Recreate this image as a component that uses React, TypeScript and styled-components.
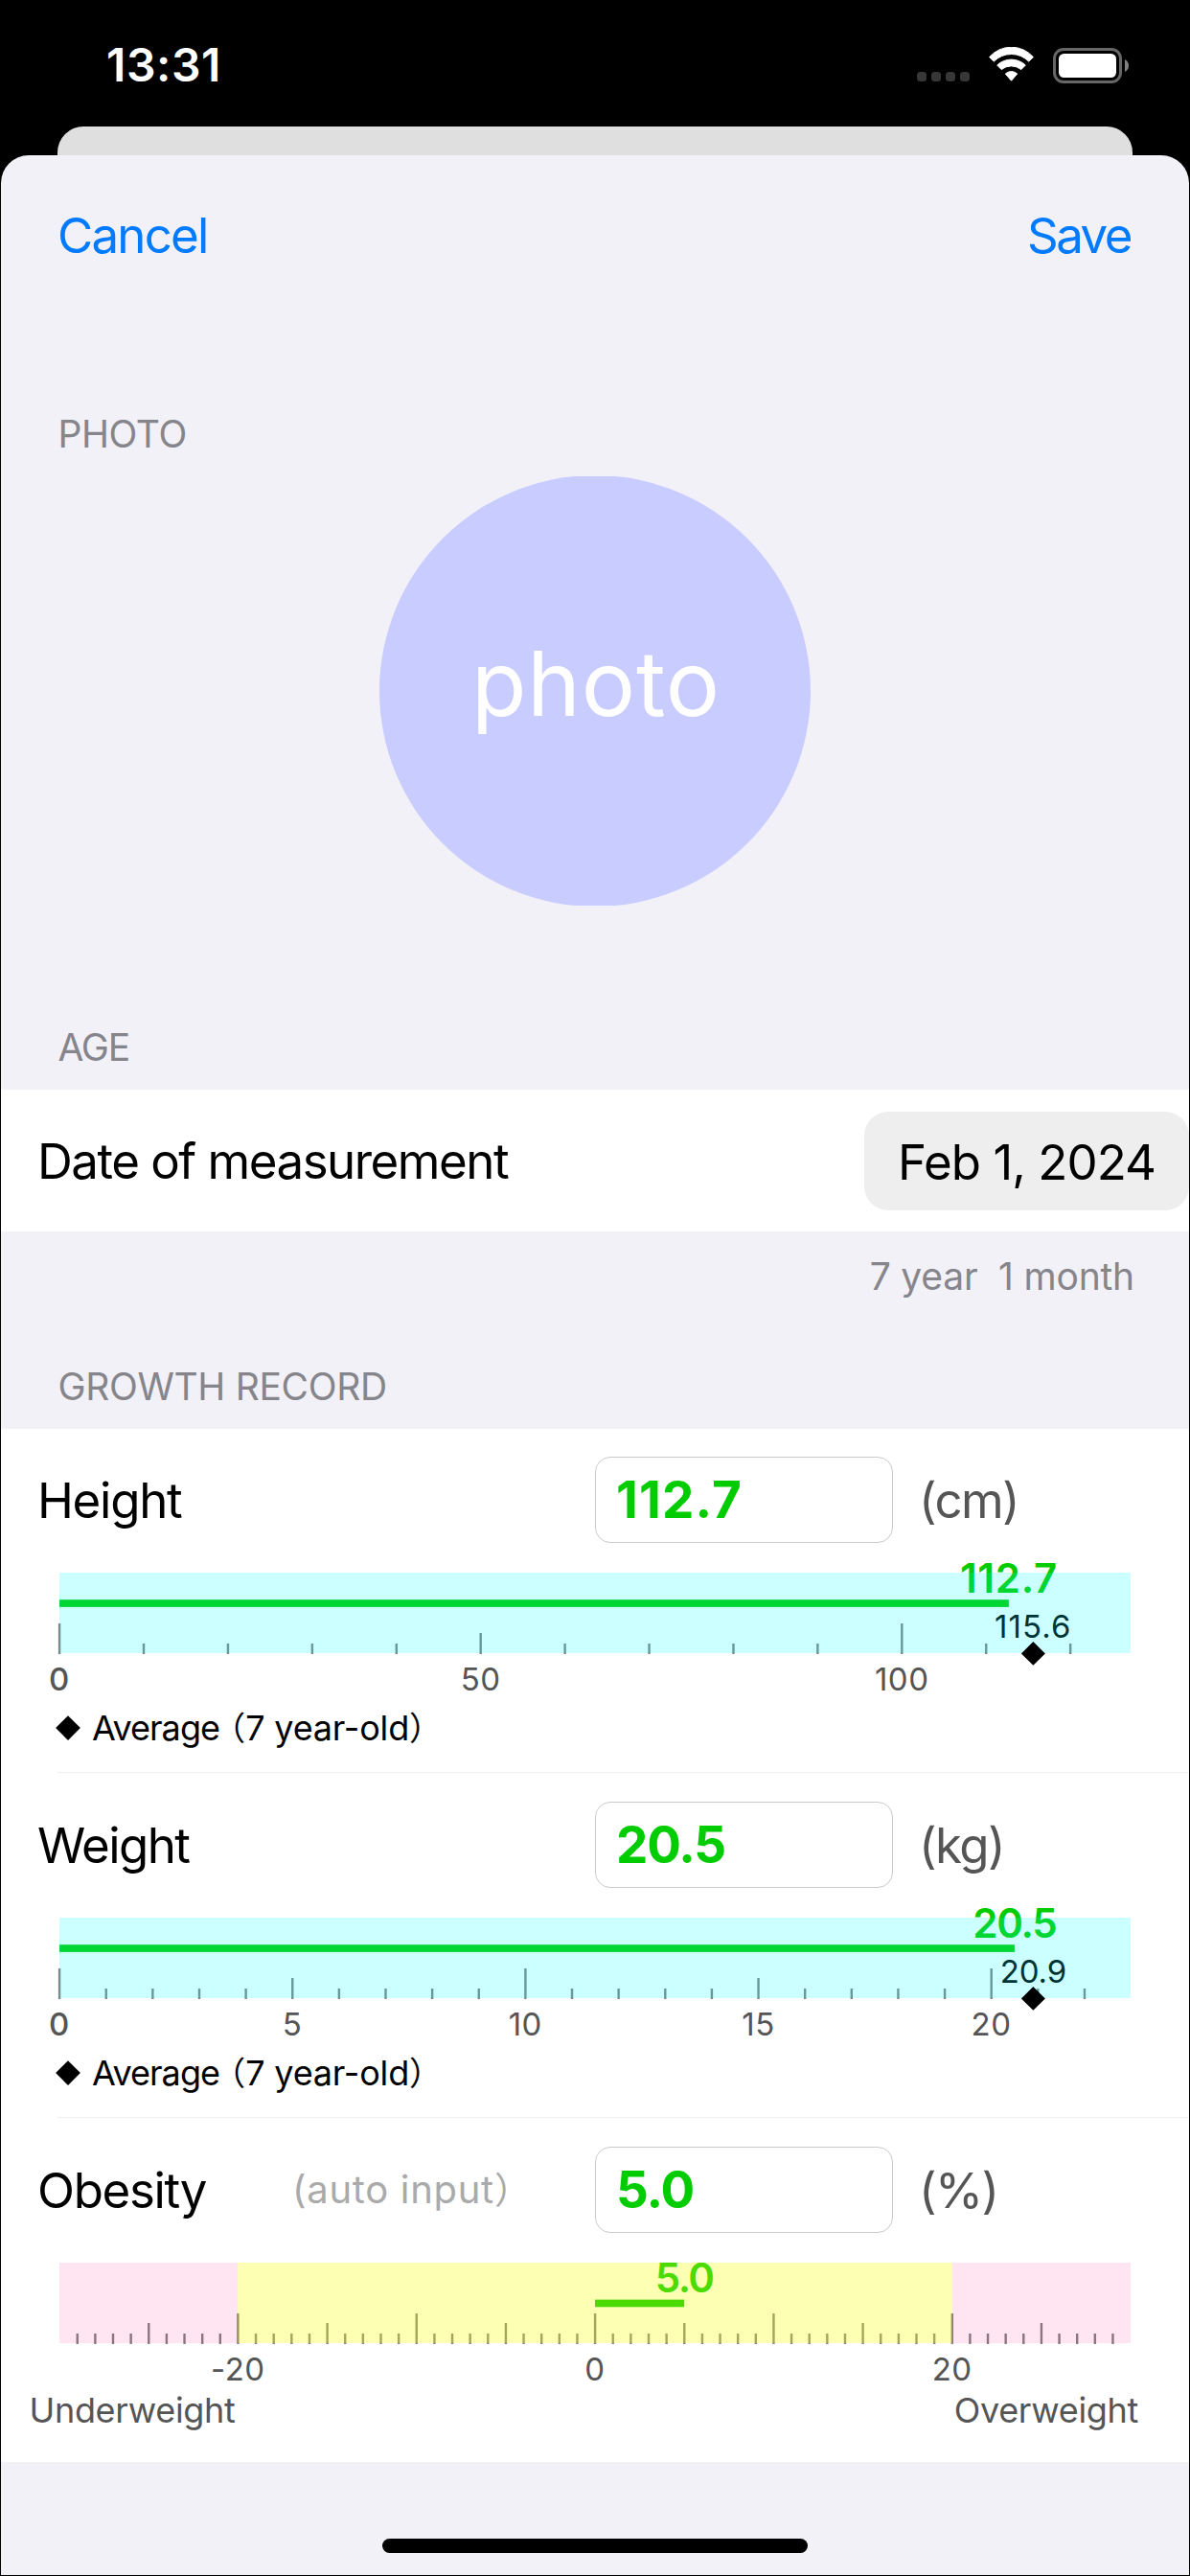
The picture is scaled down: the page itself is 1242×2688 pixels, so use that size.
import React from "react";
import styled, { createGlobalStyle } from "styled-components";

const GlobalStyle = createGlobalStyle`
  *, *::before, *::after { box-sizing: border-box; }
  html, body { margin: 0; padding: 0; background: #000; }
  body { font-family: Inter, "Noto Sans CJK JP", sans-serif; color: #000; }
`;

/* ---------- frame ---------- */

const Screen = styled.div`
  display: flex;
  flex-direction: column;
  width: 1242px;
  height: 2688px;
  background: #000;
  overflow: hidden;
`;

const StatusBar = styled.header`
  display: flex;
  align-items: center;
  flex: none;
  height: 132px;
  padding: 4px 64px 0 111px;
  color: #fff;
`;

const Clock = styled.div`
  font-size: 48px;
  font-weight: 600;
  line-height: 60px;
  letter-spacing: 0.58px;
`;

const StatusIcons = styled.div`
  display: flex;
  align-items: center;
  margin-left: auto;

  svg { display: block; }
`;

const DotsIcon = styled.svg`
  margin: 24px 20px 0 0;
`;

const WifiIcon = styled.svg`
  margin: 0 20px 2px 0;
`;

const BackCard = styled.div`
  flex: none;
  height: 30px;
  margin: 0 60px;
  border-radius: 27px 27px 0 0;
  background: #dfdfdf;
`;

const Sheet = styled.main`
  display: flex;
  flex-direction: column;
  flex: 1;
  margin: 0 1px 1px;
  border-radius: 29px 29px 0 0;
  background: #f2f1f7;
  overflow: hidden;
`;

const NavBar = styled.nav`
  display: flex;
  align-items: center;
  justify-content: space-between;
  height: 168px;
  margin-bottom: 78px;
  padding: 0 61px 0 59px;
`;

const NavButton = styled.button<{ $tracking: number }>`
  border: 0;
  padding: 0;
  background: none;
  color: #007aff;
  font: 400 51px/62px Inter, sans-serif;
  letter-spacing: ${(p) => p.$tracking}px;
`;

const SectionHeader = styled.h2<{ $tracking: number }>`
  height: 89px;
  margin: 0;
  padding-left: 59.4px;
  color: #85858b;
  font-size: 39px;
  font-weight: 400;
  line-height: 89px;
  letter-spacing: ${(p) => p.$tracking}px;
  text-transform: uppercase;
`;

/* ---------- photo ---------- */

const PhotoArea = styled.div`
  display: flex;
  justify-content: center;
  align-items: center;
  height: 448px;
  margin-bottom: 103px;
  overflow: hidden;
`;

const PhotoCircle = styled.div`
  display: flex;
  justify-content: center;
  align-items: center;
  flex: none;
  width: 450px;
  height: 450px;
  padding: 0 0 17px 2px;
  border-radius: 50%;
  background: #c9ccff;
  color: #fff;
  font-size: 94px;
  line-height: 110px;
  letter-spacing: 0.9px;
`;

/* ---------- date ---------- */

const DateRow = styled.div`
  display: flex;
  align-items: center;
  justify-content: space-between;
  height: 148px;
  padding-left: 38px;
  background: #fff;
`;

const RowLabel = styled.div<{ $tracking: number }>`
  padding-top: 2px;
  font-size: 51px;
  line-height: 62px;
  letter-spacing: ${(p) => p.$tracking}px;
  white-space: nowrap;
`;

const DatePill = styled.div`
  width: 339px;
  height: 103px;
  padding-left: 35px;
  border-radius: 25px;
  background: #eeeeef;
  font-size: 51px;
  line-height: 105px;
  letter-spacing: -0.98px;
  white-space: nowrap;
`;

const SectionFooter = styled.div`
  height: 117px;
  padding-right: 57px;
  color: #85858b;
  font-size: 39px;
  line-height: 94px;
  letter-spacing: -0.18px;
  text-align: right;
  white-space: pre;
`;

/* ---------- metrics ---------- */

const MetricList = styled.div`
  background: #fff;
`;

const Metric = styled.section`
  position: relative;
  height: 360px;
  padding-top: 30px;

  &:first-child { height: 359px; padding-top: 29px; }
  &:last-child { height: 359px; }
  &:not(:last-child)::after {
    content: "";
    position: absolute;
    left: 59px;
    right: 0;
    bottom: 0;
    height: 1px;
    background: #f1f1f2;
  }
`;

const MetricHead = styled.div`
  display: grid;
  grid-template-columns: 266px 316px 311px 1fr;
  align-items: center;
  height: 90px;
  padding-left: 38px;
`;

const Hint = styled.div`
  color: #aaa;
  font-size: 40px;
  line-height: 50px;
  letter-spacing: 0.7px;
  white-space: nowrap;
`;

const WideParen = styled.span`
  font-family: "Noto Sans CJK JP", sans-serif;
  font-size: 0.95em;
  font-feature-settings: "halt";
  letter-spacing: 0;
  line-height: 0;
`;

const ValueField = styled.div<{ $tracking: number }>`
  height: 90px;
  padding-left: 21px;
  border: 1px solid #cacacc;
  border-radius: 16px;
  color: #00cc00;
  font-size: 53px;
  font-weight: 700;
  line-height: 88px;
  letter-spacing: ${(p) => p.$tracking}px;
`;

const Unit = styled.div`
  padding: 2px 0 0 27px;
  color: #555;
  font-size: 51px;
  line-height: 62px;
  letter-spacing: -1.6px;
`;

const Legend = styled.div`
  display: flex;
  align-items: center;
  gap: 12px;
  height: 66px;
  padding-left: 57px;
  font-size: 36px;
  line-height: 44px;
  white-space: pre;
`;

const LegendWord = styled.span`
  margin-right: 10px;
  letter-spacing: -0.96px;
`;

const LegendAge = styled.span`
  letter-spacing: -0.17px;
`;

const RangeCaptions = styled.div`
  display: flex;
  justify-content: space-between;
  padding: 0 53px 0 29.5px;
  color: #555;
  font-size: 36px;
  line-height: 51px;
  letter-spacing: -0.33px;
`;

const HomeIndicator = styled.div`
  width: 444px;
  height: 15px;
  margin: 80px auto 0;
  border-radius: 8px;
  background: #000;
`;

/* ---------- chart ---------- */

const ChartSvg = styled.svg`
  display: block;
  margin-bottom: -15px;
  font-family: Inter, sans-serif;
  text-anchor: middle;
`;

const AxisText = styled.text<{ $strong: boolean }>`
  fill: #555;
  font-size: 33px;
  font-weight: ${(p) => (p.$strong ? 500 : 400)};
  letter-spacing: 0.5px;
`;

const ValueText = styled.text<{ $tracking: number }>`
  fill: #00cc00;
  font-size: 42px;
  font-weight: 600;
  letter-spacing: ${(p) => p.$tracking}px;
`;

const AverageText = styled.text<{ $tracking: number }>`
  fill: #000;
  font-size: 33px;
  letter-spacing: ${(p) => p.$tracking}px;
`;

type Band = { from: number; to: number; fill: string };

type ChartProps = {
  min: number;
  max: number;
  step: number;
  labels: number[];
  bands: Band[];
  value: number;
  valueTracking: number;
  average?: number;
  averageTracking?: number;
  drop?: number;
};

const LEFT = 61;
const WIDTH = 1118;

function GaugeChart({
  min,
  max,
  step,
  labels,
  bands,
  value,
  valueTracking,
  average,
  averageTracking = 0,
  drop = 0,
}: ChartProps) {
  const x = (v: number) => LEFT + ((v - min) / (max - min)) * WIDTH;

  const ticks: number[] = [];
  const first = min === 0 ? 0 : Math.ceil(min / step) + 1;
  for (let i = first; i * step < max; i++) ticks.push(i);
  const tickTop = (i: number) => (i % 10 === 0 ? 84 : i % 5 === 0 ? 94 : 105);

  return (
    <ChartSvg width="1240" height="175" viewBox="0 0 1240 175">
      {ticks.map((i) => (
        <rect key={i} x={x(i * step) - 1.1} y={tickTop(i)} width="2.4" height={116 - tickTop(i)} fill="#808080" />
      ))}
      <rect x={x(0)} y={59.2 + drop} width={x(value) - x(0)} height="7.7" fill="#00cc00" />
      <ValueText x={x(value)} y={52 + drop} $tracking={valueTracking}>
        {value.toFixed(1)}
      </ValueText>
      {average !== undefined && (
        <AverageText x={x(average)} y="99" $tracking={averageTracking}>
          {average.toFixed(1)}
        </AverageText>
      )}
      {bands.map((b) => (
        <rect key={b.from} x={x(b.from)} y="31" width={x(b.to) - x(b.from)} height="84" fill={b.fill} />
      ))}
      {average !== undefined && (
        <path d={`M${x(average)} 103l12.5 12.4l-12.5 12.4l-12.5 -12.4z`} fill="#000" />
      )}
      {labels.map((v) => (
        <AxisText key={v} x={x(v)} y="154" $strong={v === 0 && min === 0}>
          {v}
        </AxisText>
      ))}
    </ChartSvg>
  );
}

const AverageLegend = () => (
  <Legend>
    <svg width="26" height="26" viewBox="0 0 26 26">
      <path d="M13 .3l12.9 12.8L13 25.9.1 13.1z" />
    </svg>
    <div>
      <LegendWord>Average</LegendWord>
      <WideParen>（</WideParen>
      <LegendAge>7 year-old</LegendAge>
      <WideParen>）</WideParen>
    </div>
  </Legend>
);

const CYAN = "rgba(0, 255, 255, 0.2)";
const PINK = "rgba(255, 0, 128, 0.1)";
const YELLOW = "rgba(247, 255, 0, 0.3)";

export default function App() {
  return (
    <>
      <GlobalStyle />
      <Screen>
        <StatusBar>
          <Clock>13:31</Clock>
          <StatusIcons>
            <DotsIcon width="55" height="10" viewBox="0 0 55 10" fill="#373737">
              {[0, 15, 30, 45].map((x) => (
                <rect key={x} x={x} width="10" height="10" rx="3.5" />
              ))}
            </DotsIcon>
            <WifiIcon width="47" height="36" viewBox="0 0 47 36" fill="#fff" stroke="#fff" strokeWidth="1" strokeLinejoin="round">
              <path d="M.6 10.6A30.4 30.4 0 0 1 46.4 10.6L41.7 15.1A25.6 25.6 0 0 0 5.3 15.1Z" />
              <path d="M8.7 19A21.5 21.5 0 0 1 38.3 19L33.8 23.6A16.2 16.2 0 0 0 13.2 23.6Z" />
              <path d="M17.3 28Q23.5 23 29.7 28L23.5 35.2Z" />
            </WifiIcon>
            <svg width="79" height="37" viewBox="0 0 79 37">
              <rect x="1.5" y="1.5" width="69" height="34" rx="9.5" fill="none" stroke="#666" strokeWidth="3" />
              <rect x="6" y="6" width="60" height="25" rx="5.5" fill="#fff" />
              <path d="M75 12Q79 14.2 79 18.5T75 25Z" fill="#808080" />
            </svg>
          </StatusIcons>
        </StatusBar>
        <BackCard />
        <Sheet>
          <NavBar>
            <NavButton $tracking={-1.78}>Cancel</NavButton>
            <NavButton $tracking={-2.5}>Save</NavButton>
          </NavBar>

          <SectionHeader $tracking={-0.39}>Photo</SectionHeader>
          <PhotoArea>
            <PhotoCircle>photo</PhotoCircle>
          </PhotoArea>

          <SectionHeader $tracking={-1.1}>Age</SectionHeader>
          <DateRow>
            <RowLabel $tracking={-1.49}>Date of measurement</RowLabel>
            <DatePill>Feb 1, 2024</DatePill>
          </DateRow>
          <SectionFooter>{"7 year  1 month"}</SectionFooter>

          <SectionHeader $tracking={-0.33}>Growth record</SectionHeader>
          <MetricList>
            <Metric>
              <MetricHead>
                <RowLabel $tracking={-1.28}>Height</RowLabel>
                <span />
                <ValueField $tracking={1.14}>112.7</ValueField>
                <Unit>(cm)</Unit>
              </MetricHead>
              <GaugeChart
                min={0}
                max={115.6 * 1.1}
                step={10}
                labels={[0, 50, 100]}
                bands={[{ from: 0, to: 115.6 * 1.1, fill: CYAN }]}
                value={112.7}
                valueTracking={0.71}
                average={115.6}
                averageTracking={1.08}
              />
              <AverageLegend />
            </Metric>
            <Metric>
              <MetricHead>
                <RowLabel $tracking={-1.6}>Weight</RowLabel>
                <span />
                <ValueField $tracking={-1.2}>20.5</ValueField>
                <Unit>(kg)</Unit>
              </MetricHead>
              <GaugeChart
                min={0}
                max={20.9 * 1.1}
                step={1}
                labels={[0, 5, 10, 15, 20]}
                bands={[{ from: 0, to: 20.9 * 1.1, fill: CYAN }]}
                value={20.5}
                valueTracking={-1.24}
                average={20.9}
                averageTracking={-0.13}
              />
              <AverageLegend />
            </Metric>
            <Metric>
              <MetricHead>
                <RowLabel $tracking={-1.35}>Obesity</RowLabel>
                <Hint>
                  (auto input<WideParen>）</WideParen>
                </Hint>
                <ValueField $tracking={-1.2}>5.0</ValueField>
                <Unit>(%)</Unit>
              </MetricHead>
              <GaugeChart
                min={-30}
                max={30}
                step={1}
                labels={[-20, 0, 20]}
                bands={[
                  { from: -30, to: -20, fill: PINK },
                  { from: -20, to: 20, fill: YELLOW },
                  { from: 20, to: 30, fill: PINK },
                ]}
                value={5}
                valueTracking={-1.5}
                drop={10.4}
              />
              <RangeCaptions>
                <span>Underweight</span>
                <span>Overweight</span>
              </RangeCaptions>
            </Metric>
          </MetricList>
          <HomeIndicator />
        </Sheet>
      </Screen>
    </>
  );
}
